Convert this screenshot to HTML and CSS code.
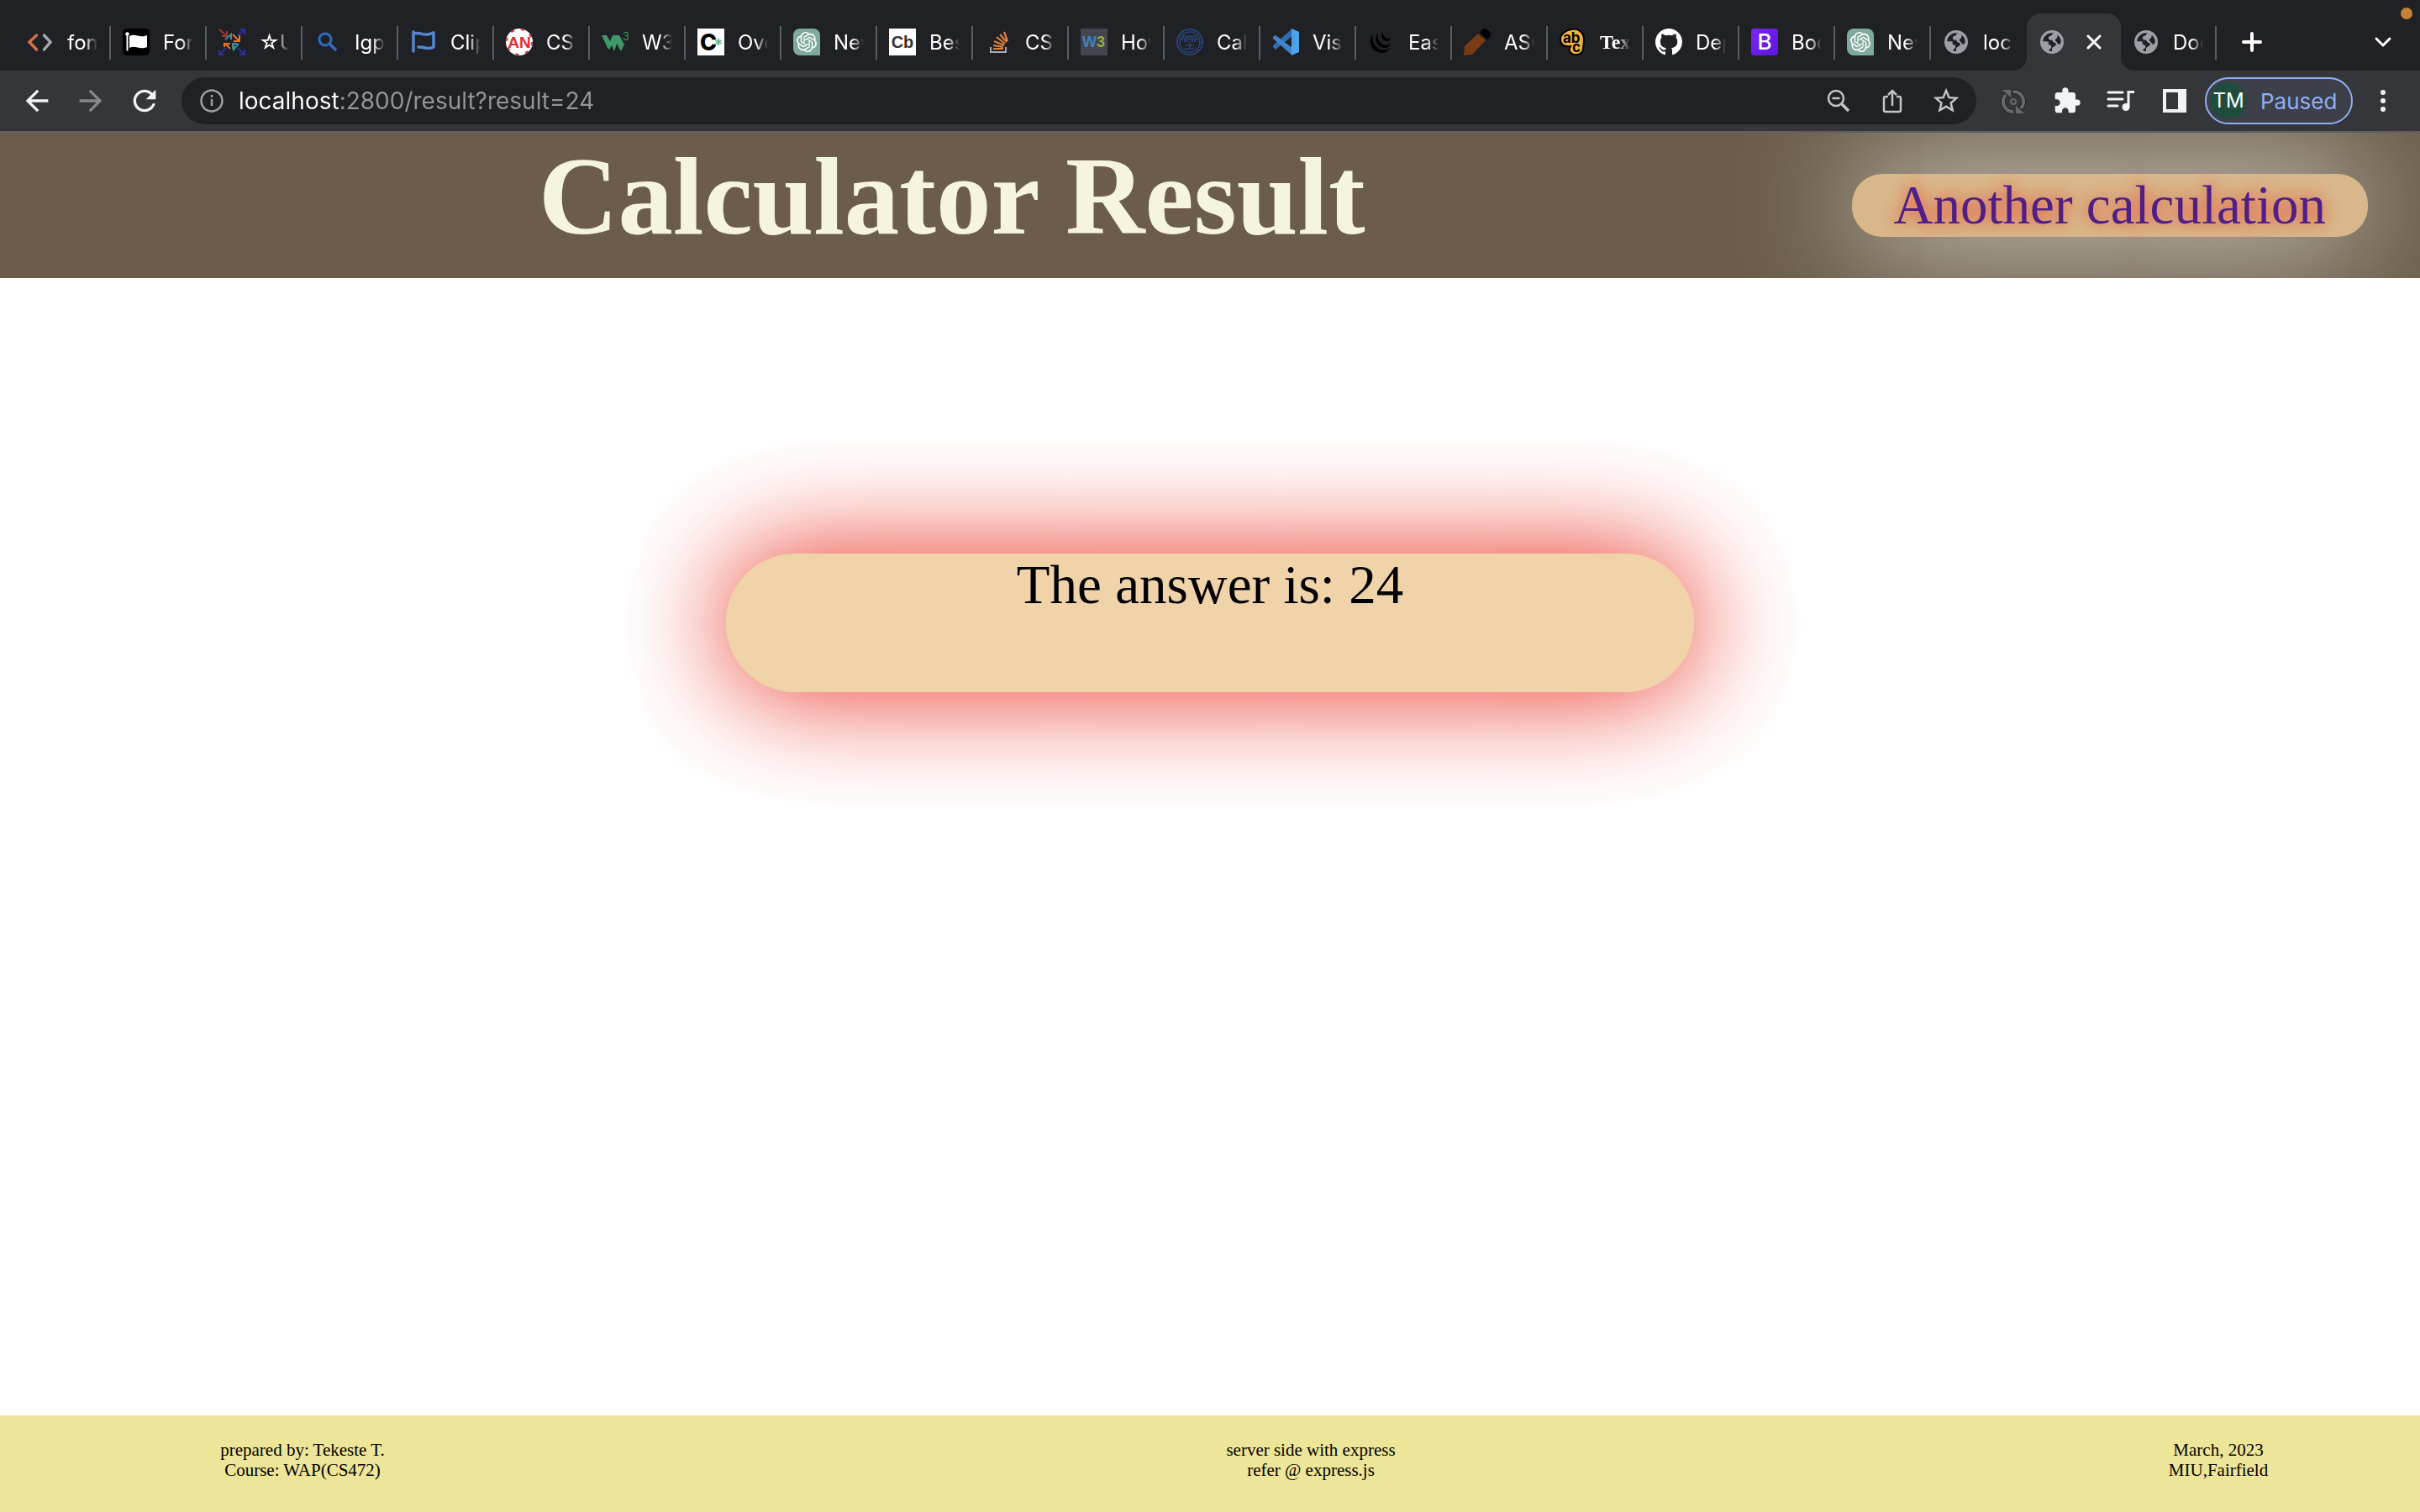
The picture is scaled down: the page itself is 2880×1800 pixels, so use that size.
FILE: index.html
```html
<!DOCTYPE html>
<html lang="en">
<head>
<meta charset="utf-8">
<title>Calculator Result</title>
<link rel="stylesheet" href="styles.css">
</head>
<body>
<svg class="defs" aria-hidden="true">
  <symbol id="globe" viewBox="0 0 32 32">
    <circle cx="16" cy="16" r="14" fill="#9aa0a5"/>
    <path class="sea" d="M5.2 15.2C5.6 9.6 10 5.3 16 5.2l2 .3c-1.400 1-2.200 1.600-2.500 3-2.300 0-3.600 1.100-3.600 2.700 0 2 1.600 2.600 4.600 2.600.2 2.300 1.300 3.200 4 3.200l.2 2.200c-1.200 2.800-4.700 2-4.700 5.200v2.500c-1 .2-2.600-.1-3.500-.4 0-1.800.8-2.600 2.600-3.200.6-3-.6-4.300-3.300-4.300v-3.200c-1.800-.9-4.200-.6-6.600-.6z"/>
    <path class="sea" d="M22.600 7.600c2.500 2 4.200 5 4.200 8.400l-1.500 2.700c-1.600 0-2.700-.8-3.200-2.300l-2-1.600v-2.300c1.900-.4 2.800-2.600 2.500-4.900z"/>
  </symbol>
  <symbol id="knot" viewBox="0 0 32 32">
    <path d="M8 0h16a8 8 0 0 1 8 8v24H8a8 8 0 0 1-8-8V8a8 8 0 0 1 8-8z" fill="#7fa99d"/>
    <g transform="translate(4 4)"><path fill="#fff" d="M22.282 9.821a5.985 5.985 0 0 0-.516-4.910 6.046 6.046 0 0 0-6.510-2.900A6.065 6.065 0 0 0 4.981 4.181a5.985 5.985 0 0 0-3.998 2.900 6.046 6.046 0 0 0 .743 7.097 5.980 5.980 0 0 0 .511 4.911 6.051 6.051 0 0 0 6.515 2.900A5.985 5.985 0 0 0 13.260 24a6.056 6.056 0 0 0 5.772-4.206 5.990 5.990 0 0 0 3.998-2.900 6.056 6.056 0 0 0-.748-7.073zM13.260 22.430a4.476 4.476 0 0 1-2.876-1.041l.142-.080 4.778-2.758a.795.795 0 0 0 .393-.681v-6.737l2.020 1.169a.071.071 0 0 1 .038.052v5.583a4.504 4.504 0 0 1-4.495 4.493zM3.600 18.304a4.471 4.471 0 0 1-.535-3.014l.142.085 4.783 2.759a.771.771 0 0 0 .780 0l5.843-3.369v2.332a.080.080 0 0 1-.033.062L9.740 19.950a4.499 4.499 0 0 1-6.140-1.646zM2.341 7.896a4.485 4.485 0 0 1 2.366-1.973V11.600a.766.766 0 0 0 .388.677l5.815 3.354-2.020 1.169a.076.076 0 0 1-.071 0l-4.830-2.787A4.504 4.504 0 0 1 2.341 7.872zm16.596 3.856l-5.833-3.387L15.119 7.200a.076.076 0 0 1 .071 0l4.830 2.791a4.494 4.494 0 0 1-.676 8.105v-5.678a.790.790 0 0 0-.407-.667zm2.011-3.023l-.142-.085-4.774-2.782a.776.776 0 0 0-.785 0L9.409 9.230V6.897a.066.066 0 0 1 .028-.062l4.830-2.787a4.499 4.499 0 0 1 6.680 4.660zM8.307 12.863l-2.020-1.164a.080.080 0 0 1-.038-.057V6.075a4.499 4.499 0 0 1 7.376-3.454l-.142.081L8.704 5.460a.795.795 0 0 0-.393.681zm1.097-2.365l2.602-1.500 2.607 1.500v2.999l-2.597 1.500-2.607-1.500z"/></g>
  </symbol>
</svg>

<div class="chrome">
  <nav class="tabs" aria-label="Tabs">
    <button class="tab"><svg class="fav" viewBox="0 0 32 32" fill="none" stroke-width="3.500" stroke-linecap="round"><path d="M11.500 8L3 16l8.500 9" stroke="#d2714a"/><path d="M20.500 8L28 16l-7.500 9" stroke="#a5a8ab"/></svg><span class="name">fon</span></button>
    <button class="tab"><svg class="fav" viewBox="0 0 32 32"><rect width="32" height="32" rx="5" fill="#000"/><circle cx="5.500" cy="6.500" r="2.200" fill="#fff"/><path d="M4.500 6.500h2v20h-2zM8 9c7-4 12 3 21-1v14c-9 4-14-3-21 1z" fill="#fff"/></svg><span class="name">For</span></button>
    <button class="tab"><svg class="fav" viewBox="0 0 32 32" fill="none" stroke-width="2"><path d="M1 1l9 8M10 3v6H4" stroke="#a13535"/><path d="M31 7V1h-6M31 1l-8 7M1 25v6h6M1 31l8-8M25 31h6v-6M31 31l-8-8" stroke="#2b2fa6"/><path d="M8 13l7-6v6M24 18l-6 7v-6M17 24v-6h5" stroke="#3f8f92"/><path d="M17 7l7 7M25 8v7h-7M14 24l-6-6h6M7 17v5" stroke="#e5742b"/></svg><span class="name">☆U</span></button>
    <button class="tab"><svg class="fav" viewBox="0 0 32 32" fill="none" stroke="#2f6cbc" stroke-width="3"><circle cx="13" cy="13" r="7"/><path d="M18 18l8 8" stroke-width="3.500"/></svg><span class="name">Igp</span></button>
    <button class="tab"><svg class="fav" viewBox="0 0 32 32" fill="none" stroke="#5686d2" stroke-width="3.500" stroke-linejoin="round" stroke-linecap="round"><path d="M4 4v23M4 6c8-2 11 2 16 1 3 0 5-1 8-2v17c-7 4-12-1-18 0"/></svg><span class="name">Clip</span></button>
    <button class="tab"><svg class="fav" viewBox="0 0 32 32"><circle cx="16" cy="16" r="16" fill="#fff"/><circle cx="16" cy="16" r="15" fill="none" stroke="#d9303a" stroke-width="2" stroke-dasharray="4 8"/><text x="16" y="23" text-anchor="middle" font-size="19" font-weight="700" font-family="Liberation Sans, sans-serif" fill="#d9303a">AN</text></svg><span class="name">CSS</span></button>
    <button class="tab"><svg class="fav" viewBox="0 0 32 32"><path d="M0 8h6l4 7 3-7h8l6 11-4 8-5-9-3 9-3-7-3 5-2-2z" fill="#3f9867"/><text x="25" y="14" font-size="13" font-family="Inter, sans-serif" fill="#3f9867">3</text></svg><span class="name">W3S</span></button>
    <button class="tab"><svg class="fav" viewBox="0 0 32 32"><path fill="#fff" d="M0 0h32v32H0z"/><text x="3" y="26" font-size="27" font-weight="800" font-family="Inter, sans-serif" fill="#000">C</text><path d="M25 12v8M21.500 14l7 4M28.500 14l-7 4" stroke="#69b990" stroke-width="2"/></svg><span class="name">Ove</span></button>
    <button class="tab"><svg class="fav"><use href="#knot"/></svg><span class="name">New</span></button>
    <button class="tab"><svg class="fav" viewBox="0 0 32 32"><path fill="#fff" d="M0 0h32v32H0z"/><text x="16" y="23" text-anchor="middle" font-size="20" font-weight="700" font-family="Liberation Sans, sans-serif" fill="#333">Cb</text></svg><span class="name">Bes</span></button>
    <button class="tab"><svg class="fav" viewBox="0 0 32 32" fill="none"><path d="M7 22v6h18v-6" stroke="#a8abae" stroke-width="2"/><path d="M10 24h12M10 20l12 2M11 15l12 5M14 10l10 8M18 7l8 9M23 4l4 11" stroke="#e2813b" stroke-width="2.200"/></svg><span class="name">CSS</span></button>
    <button class="tab"><svg class="fav" viewBox="0 0 32 32"><path fill="#44454f" d="M0 0h32v32H0z"/><text x="2" y="22" font-size="18" font-weight="700" font-family="Liberation Sans, sans-serif" fill="#3f82bd">W<tspan fill="#91ab47">3</tspan></text></svg><span class="name">How</span></button>
    <button class="tab"><svg class="fav" viewBox="0 0 32 32" fill="none" stroke="#3364c8" stroke-dasharray="2 1"><circle cx="16" cy="16" r="15" stroke-width="2" stroke-dasharray="1 1"/><circle cx="16" cy="16" r="12" stroke-width="1.500" stroke-dasharray="1 1"/><path d="M7 11h18M6 13h20M8 9h16M9 15h5M18 15h6M16 16v8M11 20h10M10 24h12" stroke-width="1"/></svg><span class="name">Calc</span></button>
    <button class="tab"><svg class="fav" viewBox="0 0 32 32"><path d="M1 22l3 3L24 9V0L1 20z" fill="#2f6fb0"/><path d="M1 10l3-2 20 15v9L1 12z" fill="#3c86cf"/><path d="M23 0l9 4v24l-9 4z" fill="#4da3ea"/></svg><span class="name">Visu</span></button>
    <button class="tab"><svg class="fav" viewBox="0 0 32 32" fill="#000"><path d="M6 6C-2 17 6 29 16 29c5 0 8-2 10-6-6 4-12 3-16-1C6 18 4 12 6 6z"/><path d="M12 4c-6 10 0 19 8 19 4 0 6-2 7-5-4 3-9 2-12-1-3-3-4-8-3-13z"/><path d="M17 3c-3 7 1 12 6 12 2 0 4-1 4-3-5 1-9-2-10-9z"/></svg><span class="name">Eas</span></button>
    <button class="tab"><svg class="fav" viewBox="0 0 32 32"><path d="M17 6l9 8-16 17-10 1 1-11z" fill="#7a3b15"/><path d="M19 5l3-4q3-2 7 1 4 3 3 7l-4 4z" fill="#000"/></svg><span class="name">ASC</span></button>
    <button class="tab"><svg class="fav" viewBox="0 0 32 32"><path d="M14 1c8-2 15 4 15 12l-1 12c-1 5-8 8-13 5-4-2-4-5-2-9C5 22 1 19 1 13S7 2 14 1z" fill="#f0b43e" stroke="#000" stroke-width="2"/><g font-family="Inter, sans-serif" font-size="17" font-weight="700" fill="#000"><text x="4" y="17">ab</text><text x="15" y="28">c</text></g></svg><span class="name serif">Text</span></button>
    <button class="tab"><svg class="fav" viewBox="0 0 16 16"><path fill="#fff" d="M8 0C3.580 0 0 3.580 0 8c0 3.540 2.290 6.530 5.470 7.590.4.070.55-.17.55-.38 0-.19-.01-.82-.01-1.490-2.010.37-2.530-.49-2.690-.94-.09-.23-.48-.94-.82-1.130-.28-.15-.68-.52-.01-.53.63-.01 1.080.58 1.230.82.72 1.210 1.870.87 2.330.66.07-.52.28-.87.51-1.070-1.780-.2-3.640-.89-3.640-3.950 0-.87.31-1.590.82-2.150-.08-.2-.36-1.020.08-2.120 0 0 .67-.21 2.200.82.64-.18 1.320-.27 2-.27s1.360.09 2 .27c1.530-1.040 2.200-.82 2.200-.82.44 1.100.16 1.920.08 2.120.51.56.82 1.270.82 2.150 0 3.070-1.870 3.750-3.650 3.950.29.25.54.73.54 1.480 0 1.070-.01 1.930-.01 2.200 0 .21.15.46.55.38A8.010 8.010 0 0 0 16 8c0-4.420-3.580-8-8-8z"/></svg><span class="name">Dep</span></button>
    <button class="tab"><svg class="fav" viewBox="0 0 32 32"><linearGradient id="violet" x2="1" y2="1"><stop stop-color="#7d25f0"/><stop offset="1" stop-color="#5a16e0"/></linearGradient><rect width="32" height="32" rx="4" fill="url(#violet)"/><text x="16" y="25" text-anchor="middle" font-size="26" font-weight="500" font-family="Inter, sans-serif" fill="#fff">B</text></svg><span class="name">Boo</span></button>
    <button class="tab"><svg class="fav"><use href="#knot"/></svg><span class="name">New</span></button>
    <button class="tab bare"><svg class="fav"><use href="#globe"/></svg><span class="name">loca</span></button>
    <button class="tab bare active" aria-label="Calculator Result" aria-current="page"><svg class="fav"><use href="#globe"/></svg><svg class="close" viewBox="0 0 20 20" stroke="#fff" stroke-width="3" stroke-linecap="round"><path d="M3 3l14 14M17 3L3 17"/></svg></button>
    <button class="tab"><svg class="fav"><use href="#globe"/></svg><span class="name">Doc</span></button>
    <button class="icon plus" aria-label="New tab"><svg viewBox="0 0 40 40" stroke="#fff" stroke-width="4" stroke-linecap="round"><path d="M20 10v20M10 20h20"/></svg></button>
    <button class="icon more-tabs" aria-label="Search tabs"><svg viewBox="0 0 40 40" fill="none" stroke="#fff" stroke-width="3" stroke-linecap="round"><path d="M12 16l8 8 8-8"/></svg></button>
    <span class="recording"></span>
  </nav>

  <div class="toolbar">
    <button class="icon" aria-label="Back"><svg viewBox="0 0 24 24" fill="#f1f3f4"><path d="M20 11H7.830l5.590-5.590L12 4l-8 8 8 8 1.410-1.410L7.830 13H20v-2z"/></svg></button>
    <button class="icon" aria-label="Forward"><svg viewBox="0 0 24 24" fill="#85888b"><path d="M4 11h12.170l-5.590-5.590L12 4l8 8-8 8-1.410-1.410L16.170 13H4v-2z"/></svg></button>
    <button class="icon" aria-label="Reload"><svg viewBox="0 0 24 24" fill="#f1f3f4"><path d="M17.650 6.350C16.200 4.900 14.210 4 12 4c-4.420 0-7.990 3.580-7.990 8s3.570 8 7.990 8c3.730 0 6.840-2.550 7.730-6h-2.080c-.82 2.330-3.040 4-5.650 4-3.310 0-6-2.690-6-6s2.690-6 6-6c1.660 0 3.140.69 4.220 1.780L13 11h7V4l-2.350 2.350z"/></svg></button>
    <div class="omnibox">
      <svg class="info" viewBox="0 0 32 32" fill="none" stroke="#9aa0a6" stroke-width="2.500"><circle cx="16" cy="16" r="12.500"/><path d="M16 14v8M16 9v3"/></svg>
      <input class="url" type="text" aria-label="Address" value="localhost:2800/result?result=24">
      <button class="icon" aria-label="Zoom"><svg viewBox="0 0 40 40" fill="none" stroke="#c3c6c9" stroke-width="2.500"><circle cx="17" cy="17" r="9"/><path d="M24 24l8 8" stroke-width="3.500"/><path d="M12.500 17h9"/></svg></button>
      <button class="icon" aria-label="Share"><svg viewBox="0 0 40 40" fill="none" stroke="#c3c6c9" stroke-width="2.500"><path d="M15 15h-3a2 2 0 0 0-2 2v14a2 2 0 0 0 2 2h16a2 2 0 0 0 2-2V17a2 2 0 0 0-2-2h-3M20 26V8M15 13l5-5 5 5"/></svg></button>
      <button class="icon" aria-label="Bookmark"><svg viewBox="0 0 24 24" fill="#c3c6c9"><path transform="translate(1 1) scale(.92)" d="M22 9.240l-7.190-.62L12 2 9.190 8.630 2 9.240l5.460 4.730L5.820 21 12 17.270 18.180 21l-1.630-7.030L22 9.240zM12 15.400l-3.760 2.270 1-4.280-3.320-2.880 4.380-.38L12 6.100l1.710 4.040 4.380.38-3.320 2.880 1 4.280L12 15.400z"/></svg></button>
    </div>
    <button class="icon" aria-label="Sync"><svg viewBox="0 0 40 40" fill="none"><g stroke="#1f2022" stroke-width="6"><path d="M20 9a12 12 0 0 1 9 20M20 33a12 12 0 0 1-9-20"/></g><g stroke="#66686a" stroke-width="4"><path d="M20 9a12 12 0 0 1 9 20M20 33a12 12 0 0 1-9-20"/><circle cx="20" cy="21" r="3" stroke-width="2"/></g><path d="M7 7h10v9zM33 35H23v-9z" fill="#66686a"/></svg></button>
    <button class="icon" aria-label="Extensions"><svg viewBox="-2 -2 28 28" fill="#f1f3f4"><path d="M20.500 11H19V7c0-1.100-.9-2-2-2h-4V3.500a2.500 2.500 0 0 0-5 0V5H4c-1.100 0-1.990.9-1.990 2v3.800H3.500c1.490 0 2.700 1.210 2.700 2.700s-1.210 2.700-2.700 2.700H2V20c0 1.100.9 2 2 2h3.800v-1.500c0-1.490 1.210-2.700 2.700-2.700 1.490 0 2.700 1.210 2.700 2.700V22H17c1.100 0 2-.9 2-2v-4h1.500a2.500 2.500 0 0 0 0-5z"/></svg></button>
    <button class="icon" aria-label="Media"><svg viewBox="0 0 40 40" stroke="#f1f3f4" stroke-width="3" fill="none" stroke-linecap="round"><path d="M5 10h17M5 18h17M5 26h11"/><path d="M29 28V9.500h7" stroke-linecap="butt"/><circle cx="26" cy="27.500" r="4.500" fill="#f1f3f4" stroke="none"/></svg></button>
    <button class="icon" aria-label="Side panel"><svg viewBox="0 0 40 40"><path fill="#f1f3f4" fill-rule="evenodd" d="M6 6h28v28H6zM10 10v20h14V10z"/></svg></button>
    <button class="profile"><span class="avatar">TM</span><span>Paused</span></button>
    <button class="icon menu" aria-label="Menu"><svg viewBox="0 0 40 40" fill="#f1f3f4"><circle cx="20" cy="10" r="3"/><circle cx="20" cy="20" r="3"/><circle cx="20" cy="30" r="3"/></svg></button>
  </div>
</div>

<header class="banner">
  <h1 class="title">Calculator Result</h1>
  <a class="again" href="/">Another calculation</a>
</header>

<main class="content">
  <p class="answer">The answer is: 24</p>
</main>

<footer class="footer">
  <p>prepared by: Tekeste T.<br>Course: WAP(CS472)</p>
  <p>server side with express<br>refer @ express.js</p>
  <p>March, 2023<br>MIU,Fairfield</p>
</footer>
</body>
</html>
```
FILE: styles.css
```css
* {
  box-sizing: border-box;
}

body {
  margin: 0;
  min-height: 100vh;
  display: flex;
  flex-direction: column;
  background: #fff;
  font-family: "Liberation Serif", serif;
}

button {
  border: 0;
  padding: 0;
  background: none;
  color: inherit;
  font: inherit;
}

.defs {
  position: absolute;
  width: 0;
  height: 0;
}

/* Browser frame */
.chrome {
  color: #fff;
  font-family: Inter, sans-serif;
  background: #35363a;
  border-bottom: 2px solid #5f5f63;
}

.tabs {
  position: relative;
  display: flex;
  height: 84px;
  padding: 16px 12px 0 18px;
  background: #202124;
}

.tab {
  position: relative;
  flex: 0 1 114px;
  display: flex;
  align-items: center;
  gap: 16px;
  height: 68px;
  padding: 0 0 0 14px;
  font-size: 24px;
}

.tab::after {
  content: "";
  position: absolute;
  right: 0;
  top: 15px;
  width: 2px;
  height: 40px;
  background: #5c5d60;
}

.bare::after {
  display: none;
}

.fav {
  flex: none;
  width: 32px;
  height: 32px;
}

.sea {
  fill: #202124;
}

.name {
  flex: none;
  width: 36px;
  overflow: hidden;
  white-space: nowrap;
  text-align: left;
  mask-image: linear-gradient(90deg, #000 60%, transparent);
}

.serif {
  font-family: "Liberation Serif", serif;
  font-weight: 700;
}

.active {
  flex-basis: 112px;
  gap: 24px;
  background: #35363a;
  border-radius: 16px 16px 0 0;
}

.active::before {
  content: "";
  position: absolute;
  left: -16px;
  right: -16px;
  bottom: 0;
  height: 16px;
  background:
    radial-gradient(circle at 0 0, transparent 16px, #35363a 16px) left / 16px 16px no-repeat,
    radial-gradient(circle at 100% 0, transparent 16px, #35363a 16px) right / 16px 16px no-repeat;
}

.close {
  width: 20px;
  height: 20px;
}

.icon {
  flex: none;
  width: 40px;
  height: 40px;
}

.icon svg {
  display: block;
  width: 100%;
  height: 100%;
}

.plus {
  margin: 14px 0 0 22px;
}

.more-tabs {
  margin: 14px 12px 0 auto;
}

.recording {
  position: absolute;
  top: 9px;
  right: 9px;
  width: 14px;
  height: 14px;
  border-radius: 50%;
  background: #c68134;
}

.toolbar {
  display: flex;
  align-items: center;
  gap: 24px;
  height: 72px;
  padding: 0 24px;
}

.omnibox {
  flex: 1;
  display: flex;
  align-items: center;
  gap: 24px;
  height: 56px;
  padding: 0 16px 0 20px;
  border-radius: 28px;
  background: #202124;
}

.info {
  flex: none;
  width: 32px;
  height: 32px;
}

.url {
  flex: 1;
  min-width: 0;
  height: 40px;
  margin-left: -8px;
  padding: 0;
  border: 0;
  outline: 0;
  font-family: Inter, sans-serif;
  font-size: 28px;
  background: linear-gradient(90deg, #fff 120px, #94979a 120px);
  background-clip: text;
  -webkit-text-fill-color: transparent;
}

.profile {
  display: flex;
  align-items: center;
  gap: 16px;
  width: 176px;
  height: 56px;
  margin: 0 -8px;
  padding-left: 4px;
  border: 2px solid #8fb0f3;
  border-radius: 28px;
  background: #3d3f49;
  color: #8fb0f3;
  font-size: 26px;
}

.avatar {
  width: 44px;
  height: 44px;
  border-radius: 50%;
  background: #204c40;
  color: #fff;
  font-size: 24px;
  line-height: 44px;
  text-align: center;
}

/* Page */
.banner {
  display: flex;
  align-items: center;
  min-height: 173px;
  padding: 0 62px;
  overflow: hidden;
  background: #6b5d49;
}

.title {
  flex: 1;
  margin: 0;
  padding-bottom: 22px;
  color: #f5f4df;
  font-size: 131px;
  line-height: 151px;
  text-align: center;
}

.again {
  padding: 0 50px;
  border-radius: 36px;
  background: #d8b88a;
  box-shadow: 0 0 150px #fff;
  color: #4f1f87;
  font-size: 65px;
  line-height: 75px;
  text-decoration: none;
  text-shadow: 0 0 20px #ea3323;
}

.content {
  flex: 1;
  padding-top: 328px;
}

.answer {
  width: 40%;
  min-height: 165px;
  margin: 0 auto;
  border-radius: 82px;
  background: #f1d3aa;
  box-shadow: 0 0 130px #ea3323, 0 0 130px 40px rgba(234, 51, 35, 0.06);
  color: #000;
  font-size: 65px;
  line-height: 75px;
  text-align: center;
}

.footer {
  display: grid;
  grid-template-columns: 3fr 7fr 2fr;
  padding: 29px 0 38px;
  background: #ede597;
  font-size: 21px;
  line-height: 24px;
  text-align: center;
}

.footer p {
  margin: 0;
}
```
